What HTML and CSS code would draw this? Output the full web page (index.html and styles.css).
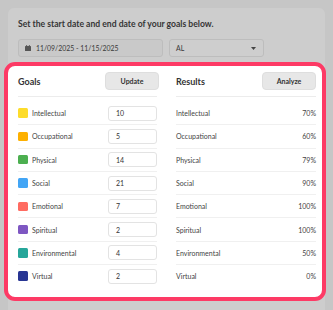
FILE: index.html
```html
<!DOCTYPE html>
<html>
<head>
<meta charset="utf-8">
<link rel="stylesheet" href="styles.css">
</head>
<body>
<div class="panel">
  <div class="title">Set the start date and end date of your goals below.</div>
  <div class="filters">
    <div class="date-input">
      <svg class="cal" width="6" height="6" viewBox="0 0 6 6"><rect x="0" y="1" width="6" height="5" rx="0.6" fill="#555"/><rect x="1.2" y="0" width="0.9" height="1.6" fill="#555"/><rect x="3.9" y="0" width="0.9" height="1.6" fill="#555"/></svg>
      <span>11/09/2025 - 11/15/2025</span>
    </div>
    <div class="select">
      <span>AL</span>
      <svg width="5" height="3" viewBox="0 0 5 3"><path d="M0 0 L5 0 L2.5 3 Z" fill="#444"/></svg>
    </div>
  </div>
  <div class="card">
    <div class="col">
      <div class="col-head">
        <span class="head-title">Goals</span>
        <span class="btn">Update</span>
      </div>
      <div class="list">
        <div class="row"><span class="sw sw-yellow"></span><span class="label">Intellectual</span><span class="num">10</span></div>
        <div class="row"><span class="sw sw-orange"></span><span class="label">Occupational</span><span class="num">5</span></div>
        <div class="row"><span class="sw sw-green"></span><span class="label">Physical</span><span class="num">14</span></div>
        <div class="row"><span class="sw sw-blue"></span><span class="label">Social</span><span class="num">21</span></div>
        <div class="row"><span class="sw sw-red"></span><span class="label">Emotional</span><span class="num">7</span></div>
        <div class="row"><span class="sw sw-purple"></span><span class="label">Spiritual</span><span class="num">2</span></div>
        <div class="row"><span class="sw sw-teal"></span><span class="label">Environmental</span><span class="num">4</span></div>
        <div class="row"><span class="sw sw-navy"></span><span class="label">Virtual</span><span class="num">2</span></div>
      </div>
    </div>
    <div class="col">
      <div class="col-head">
        <span class="head-title">Results</span>
        <span class="btn">Analyze</span>
      </div>
      <div class="list">
        <div class="row"><span class="label">Intellectual</span><span class="pct">70%</span></div>
        <div class="row"><span class="label">Occupational</span><span class="pct">60%</span></div>
        <div class="row"><span class="label">Physical</span><span class="pct">79%</span></div>
        <div class="row"><span class="label">Social</span><span class="pct">90%</span></div>
        <div class="row"><span class="label">Emotional</span><span class="pct">100%</span></div>
        <div class="row"><span class="label">Spiritual</span><span class="pct">100%</span></div>
        <div class="row"><span class="label">Environmental</span><span class="pct">50%</span></div>
        <div class="row"><span class="label">Virtual</span><span class="pct">0%</span></div>
      </div>
    </div>
  </div>
</div>
</body>
</html>
```

FILE: styles.css
```css
html, body {
  margin: 0;
  padding: 0;
}
body {
  background: #c6c6c6;
  font-family: Lato, "Open Sans", sans-serif;
  width: 333px;
  height: 310px;
  overflow: hidden;
}
.panel {
  margin: 8px 0 0 8px;
  width: 317px;
  height: 310px;
  box-sizing: border-box;
  background: #cdcdcd;
  border-radius: 6px 6px 0 0;
  padding: 10px 0 0 10px;
}
.title {
  font-size: 8.6px;
  font-weight: 700;
  color: #353535;
  line-height: 12px;
  height: 12px;
}
.filters {
  display: flex;
  gap: 6px;
  margin-top: 9px;
}
.date-input, .select {
  height: 18px;
  box-sizing: border-box;
  border: 1px solid #bdbdbd;
  border-radius: 3px;
  display: flex;
  align-items: center;
  font-size: 6.9px;
  color: #3a3a3a;
}
.date-input {
  width: 145px;
  background: #c9c9c9;
  padding-left: 6px;
  gap: 5px;
}
.cal {
  display: block;
}
.select {
  width: 95px;
  background: #cecece;
  padding: 0 7px 0 6px;
  justify-content: space-between;
}
.select svg {
  display: block;
}
.card {
  margin: 5px 0 0 -14px;
  width: 322px;
  height: 239px;
  box-sizing: border-box;
  border: 4px solid #fd3a65;
  border-radius: 11px;
  background: #fff;
  display: grid;
  grid-template-columns: 139px 140px;
  column-gap: 19px;
  padding: 6px 6px 0 10px;
}
.col-head {
  display: flex;
  justify-content: space-between;
  align-items: center;
  height: 18px;
  padding-bottom: 6px;
  border-bottom: 1px solid #ececec;
}
.head-title {
  font-size: 9px;
  font-weight: 700;
  color: #333;
}
.btn {
  width: 54px;
  height: 18px;
  box-sizing: border-box;
  background: #e7e7e7;
  border: 1px solid #dedede;
  border-radius: 4px;
  display: flex;
  align-items: center;
  justify-content: center;
  font-size: 7px;
  font-weight: 700;
  color: #333;
}
.col:first-child .btn {
  margin-right: -2px;
}
.list {
  padding-top: 5px;
}
.row {
  height: 22.3px;
  border-bottom: 1px solid #f0f0f0;
  display: flex;
  align-items: center;
}
.row:last-child {
  border-bottom: none;
}
.sw {
  width: 9.5px;
  height: 9.5px;
  border-radius: 1.5px;
  margin-right: 4.5px;
  flex: none;
}
.sw-yellow { background: #fddc2b; }
.sw-orange { background: #fdb000; }
.sw-green { background: #4caf50; }
.sw-blue { background: #42a5f5; }
.sw-red { background: #ff6b61; }
.sw-purple { background: #7e57c2; }
.sw-teal { background: #26a69a; }
.sw-navy { background: #283593; }
.label {
  font-size: 7px;
  color: #444;
  flex: 1;
}
.num {
  width: 49px;
  height: 15px;
  box-sizing: border-box;
  border: 1px solid #e3e3e3;
  border-radius: 3px;
  font-size: 7px;
  color: #333;
  display: flex;
  align-items: center;
  padding-left: 7px;
}
.pct {
  font-size: 7px;
  color: #444;
}
```
